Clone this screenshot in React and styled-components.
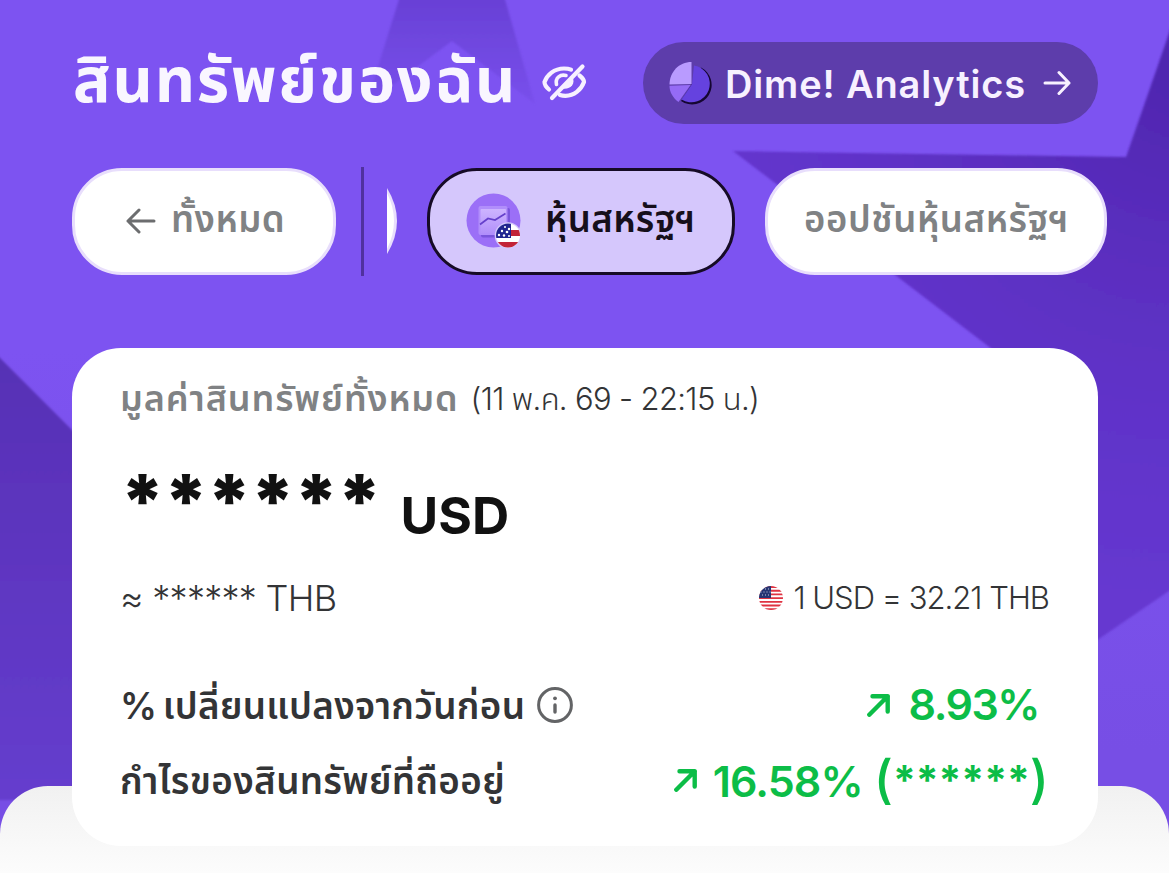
import React from "react";
import styled, { createGlobalStyle } from "styled-components";

const Global = createGlobalStyle`
  * { box-sizing: border-box; }
  body { margin: 0; font-family: Inter, "Noto Sans Thai", "Noto Sans", sans-serif; }
`;

const Screen = styled.main`
  position: relative;
  width: 1169px;
  height: 873px;
  overflow: hidden;
  background: linear-gradient(#7d53f1 350px, #774ee5 750px);
  display: flex;
  flex-direction: column;
  isolation: isolate;
`;

const Backdrop = styled.svg`
  position: absolute;
  inset: 0;
  z-index: -2;
`;

const Sheet = styled.div`
  position: absolute;
  left: 0;
  right: 0;
  bottom: 0;
  height: 87px;
  z-index: -1;
  border-radius: 48px 48px 0 0;
  background: linear-gradient(#f1f1f1, #fcfcfc);
`;

const Label = styled.span`
  display: block;
  white-space: nowrap;
  font-size: ${(p) => p.$size}px;
  font-weight: ${(p) => p.$weight || 400};
  letter-spacing: ${(p) => p.$track || 0}px;
  word-spacing: ${(p) => p.$words || 0}px;
  line-height: ${(p) => p.$line || 50}px;
  color: ${(p) => p.$color || "#333436"};
  margin-left: ${(p) => p.$gap || 0}px;
  padding-top: ${(p) => p.$drop || 0}px;
  padding-bottom: ${(p) => p.$raise || 0}px;
`;

const Header = styled.header`
  display: flex;
  align-items: center;
  height: 82px;
  margin: 42px 71px 0 73px;
`;

const HideButton = styled.button`
  border: 0;
  padding: 0 0 1px;
  margin-left: 24px;
  background: none;
  display: flex;
`;

const AnalyticsButton = styled.button`
  display: flex;
  align-items: center;
  width: 455px;
  height: 82px;
  margin-left: auto;
  padding: 0 27px 0 24px;
  border: 0;
  border-radius: 41px;
  background: #5d3dab;
  font-family: inherit;
`;

const Filters = styled.nav`
  display: flex;
  align-items: center;
  height: 110px;
  margin: 42px 0 0 72px;
`;

const Chip = styled.button`
  display: flex;
  align-items: center;
  flex: none;
  width: ${(p) => p.$width}px;
  height: 107px;
  padding: 0 0 0 ${(p) => p.$inset}px;
  border: 3px solid ${(p) => (p.$active ? "#160b26" : "#e8defc")};
  border-radius: 50px;
  background: ${(p) => (p.$active ? "#d5c7fc" : "#fff")};
  font-family: inherit;
`;

const Divider = styled.div`
  width: 3px;
  height: 109px;
  margin-left: 25px;
  background: #50319f;
`;

const Scroller = styled.div`
  display: flex;
  align-items: center;
  gap: 30px;
  width: 782px;
  margin-left: 23px;
  overflow: hidden;
`;

const ChipEdge = styled.svg`
  flex: none;
  display: block;
`;

const Card = styled.section`
  display: flex;
  flex-direction: column;
  width: 1026px;
  height: 498px;
  margin: 72px 0 0 72px;
  padding: 25px 49px 0 48px;
  border-radius: 49px;
  background: #fff;
`;

const Row = styled.div`
  display: flex;
  align-items: ${(p) => p.$align || "center"};
  height: ${(p) => p.$height}px;
  margin-top: ${(p) => p.$top || 0}px;
`;

const InfoButton = styled.button`
  display: flex;
  border: 0;
  padding: 0;
  margin: 0 0 0 12px;
  background: none;
`;

const End = styled.div`
  display: flex;
  align-items: center;
  margin-left: auto;
  margin-right: ${(p) => p.$right || 0}px;
`;

const Stroke = ({ w, h, box, d, color, width }) => (
  <svg width={w} height={h} viewBox={box} fill="none" stroke={color} strokeWidth={width}
    strokeLinecap="round" strokeLinejoin="round"><path d={d} /></svg>
);

const EyeOff = () => (
  <svg width="46" height="40" viewBox="541 62 46 40" fill="none" stroke="#f7f1ff" strokeWidth="4.2" strokeLinecap="round" strokeLinejoin="round">
    <path d="M549 88.500C546 86 544.500 83 544.500 81C547 74 554 67.500 564 67.500C567 67.500 569 67.800 571 68.600" />
    <path d="M579.500 74.500C582 76.500 584 79 584 81C581 89 574 94.800 565.500 94.800C563.500 94.800 561.500 94.500 560 94" />
    <path d="M582.500 65.500L552 97" />
    <path d="M556.500 83.500C555 76.500 560.500 73 566 74.500" strokeWidth="3.600" />
    <path d="M561.500 87.500L572.500 76.500C576 82.500 570 89.500 561.500 87.500Z" fill="#f7f1ff" stroke="none" />
  </svg>
);

const PieIcon = () => (
  <svg width="46" height="46" viewBox="667 60 46 46">
    <path d="M701 67.500A19.550 19.550 0 1 1 681 101L692 84Z" fill="#150631" />
    <path d="M694 65.500A18.500 18.500 0 1 1 681.500 99.500L692 84Z" fill="#6542df" />
    <path d="M691.500 84V62C679 62 669.500 72 669.500 84.500Z" fill="#b99bff" />
    <path d="M669.500 85.800L690.500 85L678.500 102C673 98 669.500 92.500 669.500 85.800Z" fill="#956bf5" />
  </svg>
);

const StockIcon = () => (
  <svg width="56" height="56" viewBox="465 194 56 56">
    <defs>
      <linearGradient id="paper" x2="0" y2="1"><stop stopColor="#cdb4ff" /><stop offset="1" stopColor="#b391fa" /></linearGradient>
      <clipPath id="badge"><circle cx="508" cy="236.500" r="12" /></clipPath>
    </defs>
    <circle cx="493.500" cy="221.500" r="27" fill="#9b6ff7" />
    <rect x="481" y="209" width="29" height="29.500" rx="2" fill="#7a55dc" />
    <rect x="478.500" y="207" width="29" height="29" rx="2" fill="#b18efb" />
    <rect x="480.500" y="210" width="25.500" height="24" rx="1" fill="url(#paper)" />
    <path d="M480 225.500L488 219.500L495 221L505.500 214.500" fill="none" stroke="#6540cb" strokeWidth="1.700" />
    <circle cx="508" cy="236.500" r="13.300" fill="#d5c7fc" />
    <g clipPath="url(#badge)">
      <path fill="#fff" d="M496 224h25v25h-25z" />
      <path fill="#c22338" d="M511 231h10v6h-10zM496 243h25v6h-25z" />
      <path fill="#20248f" d="M496 224h15v15h-15z" />
      <g fill="#fff"><circle cx="505" cy="228" r="1" /><circle cx="509" cy="230" r="1.200" /><circle cx="502" cy="232" r="1.200" /><circle cx="507" cy="233" r="1.300" /><circle cx="499" cy="236" r="1.200" /><circle cx="504" cy="236.500" r="1.200" /><circle cx="509" cy="237" r="1" /></g>
    </g>
  </svg>
);

const Flag = () => (
  <svg width="24" height="24" viewBox="0 0 24 24">
    <defs><clipPath id="round"><circle cx="12" cy="12" r="12" /></clipPath></defs>
    <g clipPath="url(#round)">
      <path fill="#fff" d="M0 0h24v24H0z" />
      <path stroke="#df3342" strokeWidth="1.850" d="M0 1h24M0 4.700h24M0 8.400h24M0 12.100h24M0 15.800h24M0 19.500h24M0 23.200h24" />
      <path fill="#263573" d="M0 0h12v12H0z" />
      <path stroke="#c4cae1" strokeWidth="1" strokeDasharray="1 2" d="M3 3h9M1.500 6h10M3 9h9" />
    </g>
  </svg>
);

const InfoIcon = () => (
  <svg width="36" height="36" viewBox="0 0 36 36">
    <circle cx="18" cy="18" r="16.400" fill="none" stroke="#636466" strokeWidth="3" />
    <path d="M18 18v7" stroke="#636466" strokeWidth="3.400" strokeLinecap="round" />
    <circle cx="18" cy="11.300" r="1.900" fill="#636466" />
  </svg>
);

const UpArrow = () => <Stroke w={23} h={23} box="0 0 23 23" d="M2.300 20.700L20.700 2.300M5.500 2.300H20.700V17.500" color="#0cbd47" width={4.4} />;

export default function App() {
  return (
    <Screen lang="th">
      <Global />
      <Backdrop width="1169" height="873">
        <defs>
          <linearGradient id="ribbon" x2="0" y2="1"><stop stopColor="#6840d5" /><stop offset="1" stopColor="#7950ec" /></linearGradient>
          <radialGradient id="star" gradientUnits="userSpaceOnUse" cx="1185" cy="60" r="540"><stop stopColor="#4e25ae" /><stop offset="0.35" stopColor="#5a2ebe" /><stop offset="0.65" stopColor="#6033c9" /><stop offset="1" stopColor="#6638d0" /></radialGradient>
          <linearGradient id="leftStar" gradientUnits="userSpaceOnUse" x1="0" y1="358" x2="0" y2="786"><stop stopColor="#5730b5" /><stop offset="1" stopColor="#653dcd" /></linearGradient>
          <filter id="soft"><feGaussianBlur stdDeviation="1.200" /></filter>
        </defs>
        <g filter="url(#soft)">
          <path fill="url(#ribbon)" d="M400-4H504L535 104L452 41L366 105Z" />
          <path fill="url(#star)" d="M733 151L1126 157L1175 16V587L1090 645L1090 424Z" />
          <path fill="url(#leftStar)" d="M-5 353L90 448V800H-5Z" />
        </g>
      </Backdrop>
      <Sheet />
      <Header>
        <Label $size={62.5} $weight={700} $line={82} $track={1.85} $raise={8} $color="#f9f6ff">สินทรัพย์ของฉัน</Label>
        <HideButton><EyeOff /></HideButton>
        <AnalyticsButton>
          <PieIcon />
          <Label $size={38} $weight={600} $track={0.85} $drop={1} $color="#f7f1ff" $gap={12}>Dime! Analytics</Label>
          <End><Stroke w={28} h={26} box="0 0 28 26" d="M2 13H26M16 2.500L26 13L16 23.500" color="#f7f1ff" width={3} /></End>
        </AnalyticsButton>
      </Header>
      <Filters>
        <Chip $width={264} $inset={51}>
          <Stroke w={30} h={28} box="0 0 30 28" d="M28 14H2M13 3L2 14L13 25" color="#6c6d6f" width={3} />
          <Label $size={36.5} $weight={600} $track={0.5} $raise={5} $color="#808284" $gap={15}>ทั้งหมด</Label>
        </Chip>
        <Divider />
        <Scroller>
          <ChipEdge width="10" height="66" viewBox="0 0 10 66"><path d="M0 0Q20 33 0 66Z" fill="#e8defc" /><path d="M0 5Q14 33 0 61Z" fill="#fff" /></ChipEdge>
          <Chip $width={308} $inset={35} $active>
            <StockIcon />
            <Label $size={36.5} $weight={600} $track={0.4} $raise={5} $color="#160f1b" $gap={24}>หุ้นสหรัฐฯ</Label>
          </Chip>
          <Chip $width={342} $inset={36}>
            <Label $size={36.5} $weight={600} $track={0.6} $raise={5} $color="#808284">ออปชันหุ้นสหรัฐฯ</Label>
          </Chip>
        </Scroller>
      </Filters>
      <Card>
        <Row $height={50}>
          <Label $size={36} $weight={600} $track={0.9} $color="#808284">มูลค่าสินทรัพย์ทั้งหมด</Label>
          <Label $size={31} $weight={360} $track={-0.65} $gap={12} $drop={1}>(11 พ.ค. 69 - 22:15 น.)</Label>
        </Row>
        <Row $height={90} $top={31} $align="flex-start">
          <Label $size={74} $weight={900} $line={94} $track={-1.6} $color="#111">******</Label>
          <Label $size={51.5} $weight={750} $line={60} $drop={31} $color="#111" $gap={20}>USD</Label>
        </Row>
        <Row $height={50} $top={29}>
          <Label $size={36} $weight={360} $track={-0.7}>≈ ****** THB</Label>
          <End>
            <Flag />
            <Label $size={31} $weight={360} $track={-1} $raise={1} $gap={10}>1 USD = 32.21 THB</Label>
          </End>
        </Row>
        <Row $height={60} $top={52}>
          <Label $size={36.8} $weight={600} $track={0.3} $words={-4} $drop={2}>% เปลี่ยนแปลงจากวันก่อน</Label>
          <InfoButton><InfoIcon /></InfoButton>
          <End $right={10}><UpArrow /><Label $size={43} $weight={600} $track={-1.5} $raise={3} $color="#0cbd47" $gap={19}>8.93%</Label></End>
        </Row>
        <Row $height={60} $top={15}>
          <Label $size={36.8} $weight={600} $track={0.33} $drop={2}>กำไรของสินทรัพย์ที่ถืออยู่</Label>
          <End>
            <UpArrow />
            <Label $size={43} $weight={600} $track={-0.9} $drop={1} $color="#0cbd47" $gap={16}>16.58%</Label>
            <Label $size={52} $weight={500} $raise={1} $color="#0cbd47" $gap={11}>(</Label>
            <Label $size={41} $weight={650} $track={-0.1} $color="#0cbd47">******</Label>
            <Label $size={52} $weight={500} $raise={1} $color="#0cbd47">)</Label>
          </End>
        </Row>
      </Card>
    </Screen>
  );
}
